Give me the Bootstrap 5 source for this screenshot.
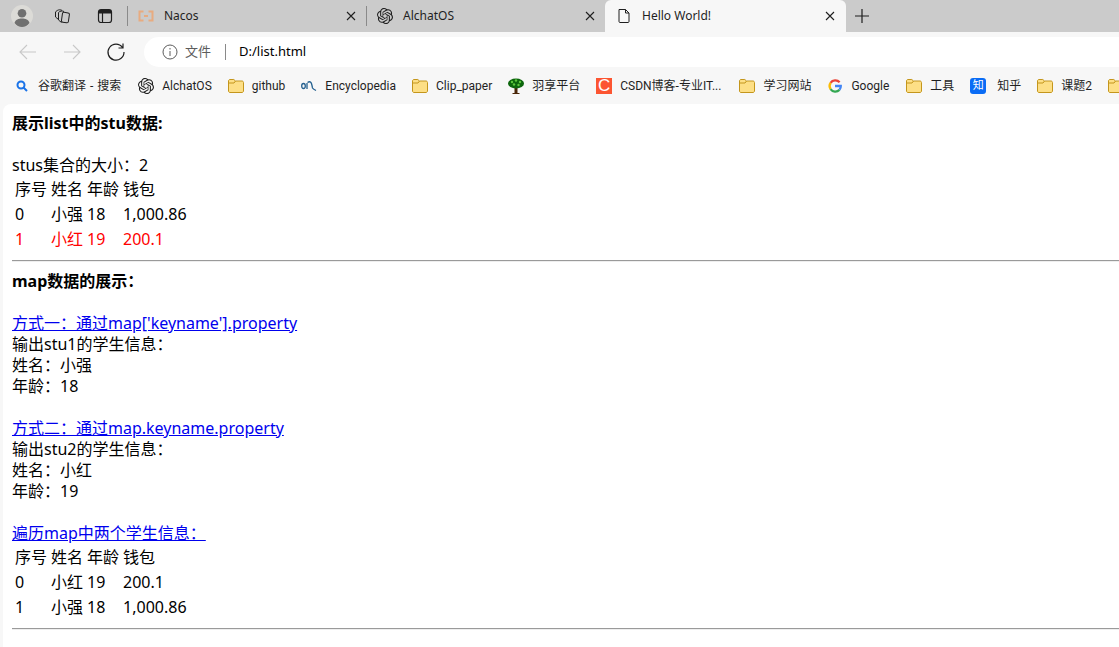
<!DOCTYPE html>
<html lang="zh">

<head>
    <meta charset="utf-8">
    <title>Hello World!</title>
    <link href="https://cdn.jsdelivr.net/npm/bootstrap@5.3.0/dist/css/bootstrap.min.css" rel="stylesheet">
    <style>
        html, body {
            height: 100%;
            overflow: hidden;
        }

        body {
            width: 1119px;
            background-color: #f7f7f7;
            font-family: "Noto Sans", "Noto Sans CJK SC", sans-serif;
            color: #000;
        }

        /* tab strip */
        .tab-strip {
            height: 32px;
            background-color: #cbcbcb;
            font-size: 12px;
            color: #1f1f1f;
        }

        .strip-avatar {
            margin-left: 11px;
            width: 22px;
            height: 22px;
        }

        .strip-btn {
            width: 16px;
            height: 16px;
        }

        .strip-collections {
            margin-left: 21px;
        }

        .strip-actions {
            margin-left: 27px;
            margin-right: 14px;
        }

        .strip-sep {
            width: 1px;
            height: 20px;
            background-color: #8a8a8a;
            flex: none;
        }

        .tab-item {
            width: 238px;
            height: 32px;
            padding: 0 10px;
            flex: none;
        }

        .tab-item.is-active {
            width: 241px;
            height: 36px;
            align-self: flex-start;
            padding: 0 11px 4px;
            background-color: #f7f7f7;
            border-radius: 6px 6px 0 0;
        }

        .tab-icon {
            width: 16px;
            height: 16px;
            flex: none;
            margin-right: 10px;
        }

        .tab-close {
            width: 10px;
            height: 10px;
            margin-left: auto;
            flex: none;
        }

        /* address row */
        .addr-row {
            height: 38px;
            padding-top: 1px;
            position: relative;
        }

        .nav-icon {
            width: 20px;
            height: 20px;
            flex: none;
            margin-left: 24px;
        }

        .nav-back {
            margin-left: 18px;
        }

        .addr-bar {
            margin-left: 18px;
            width: 1000px;
            height: 30px;
            background-color: #fff;
            border-radius: 15px;
            padding-left: 18px;
            font-size: 13px;
            flex: none;
        }

        .addr-label {
            color: #5c5c5c;
            margin-left: 7px;
        }

        .addr-sep {
            width: 1px;
            height: 16px;
            background-color: #8a8a8a;
            margin: 0 13px 0 14px;
        }

        /* bookmarks */
        .mark-row {
            height: 32px;
            margin-bottom: 2px;
            padding-left: 14px;
            font-family: Roboto, "Noto Sans CJK SC", sans-serif;
            font-size: 12px;
            color: #1f1f1f;
            white-space: nowrap;
        }

        .mark-item {
            margin-right: 16px;
            flex: none;
        }

        .mark-search {
            word-spacing: 1px;
            margin-right: 17px;
        }

        .mark-wide {
            margin-right: 18px;
        }

        .mark-google {
            margin-right: 17px;
        }

        .mark-icon {
            width: 16px;
            height: 16px;
            margin-right: 8px;
            flex: none;
        }

        .mark-csdn {
            background-color: #fc5531;
            color: #fff;
            font: 17px/16px "Liberation Sans", sans-serif;
            text-align: center;
        }

        .mark-zhi {
            background-color: #0a6cf5;
            color: #fff;
            border-radius: 3px;
            font-size: 11px;
            line-height: 16px;
            text-align: center;
            margin-right: 11px;
        }

        /* page */
        .page-view {
            margin-left: 3px;
            height: 543px;
            padding: 9px 0 0 9px;
            background-color: #fff;
            border-radius: 8px 0 0 0;
            font-size: 16px;
            line-height: 21px;
            overflow: hidden;
        }

        .page-view a {
            color: #00e;
        }

        .page-view hr {
            margin: 7px 0 9px;
            border: 0;
            border-top: 1px solid #9a9a9a;
            border-bottom: 1px solid #eee;
            opacity: 1;
        }

        .stu-table {
            border-collapse: separate;
            border-spacing: 2px;
        }

        .stu-table td {
            padding: 1px;
        }

        .stu-red td {
            color: #f00;
        }
    </style>
</head>

<body>
    <svg width="0" height="0" class="position-absolute">
        <defs>
            <symbol id="ic-knot" viewBox="0 0 24 24">
                <path fill="currentColor" d="M22.2819 9.8211a5.9847 5.9847 0 0 0-.5157-4.9108 6.0462 6.0462 0 0 0-6.5098-2.9A6.0651 6.0651 0 0 0 4.9807 4.1818a5.9847 5.9847 0 0 0-3.9977 2.9 6.0462 6.0462 0 0 0 .7427 7.0966 5.98 5.98 0 0 0 .511 4.9107 6.051 6.051 0 0 0 6.5146 2.9001A5.9847 5.9847 0 0 0 13.2599 24a6.0557 6.0557 0 0 0 5.7718-4.2058 5.9894 5.9894 0 0 0 3.9977-2.9001 6.0557 6.0557 0 0 0-.7475-7.0729zm-9.022 12.6081a4.4755 4.4755 0 0 1-2.8764-1.0408l.1419-.0804 4.7783-2.7582a.7948.7948 0 0 0 .3927-.6813v-6.7369l2.02 1.1686a.071.071 0 0 1 .038.052v5.5826a4.504 4.504 0 0 1-4.4945 4.4944zm-9.6607-4.1254a4.4708 4.4708 0 0 1-.5346-3.0137l.142.0852 4.783 2.7582a.7712.7712 0 0 0 .7806 0l5.8428-3.3685v2.3324a.0804.0804 0 0 1-.0332.0615L9.74 19.9502a4.4992 4.4992 0 0 1-6.1408-1.6464zM2.3408 7.8956a4.485 4.485 0 0 1 2.3655-1.9728V11.6a.7664.7664 0 0 0 .3879.6765l5.8144 3.3543-2.0201 1.1685a.0757.0757 0 0 1-.071 0l-4.8303-2.7865A4.504 4.504 0 0 1 2.3408 7.872zm16.5963 3.8558L13.1038 8.364 15.1192 7.2a.0757.0757 0 0 1 .071 0l4.8303 2.7913a4.4944 4.4944 0 0 1-.6765 8.1042v-5.6772a.79.79 0 0 0-.407-.667zm2.0107-3.0231l-.142-.0852-4.7735-2.7818a.7759.7759 0 0 0-.7854 0L9.409 9.2297V6.8974a.0662.0662 0 0 1 .0284-.0615l4.8303-2.7866a4.4992 4.4992 0 0 1 6.6802 4.66zM8.3065 12.863l-2.02-1.1638a.0804.0804 0 0 1-.038-.0567V6.0742a4.4992 4.4992 0 0 1 7.3757-3.4537l-.142.0805L8.704 5.459a.7948.7948 0 0 0-.3927.6813zm1.0976-2.3654l2.602-1.4998 2.6069 1.4998v2.9994l-2.5974 1.4997-2.6067-1.4997Z" />
            </symbol>
            <symbol id="ic-folder" viewBox="0 0 16 16">
                <path d="M.5 3C.5 2.200 1.100 1.500 2 1.500h3.800L7.500 3h6.500c.8 0 1.500.7 1.500 1.500V13c0 .8-.7 1.500-1.500 1.500H2c-.9 0-1.500-.7-1.500-1.500Z" fill="#fddf86" stroke="#c4961c" />
                <path d="M.8 5H6l1.500-2" fill="none" stroke="#c4961c" />
            </symbol>
            <symbol id="ic-close" viewBox="0 0 10 10">
                <path d="M1 1l8 8M9 1l-8 8" stroke="#1f1f1f" stroke-width="1.100" fill="none" />
            </symbol>
        </defs>
    </svg>

    <!-- tabs -->
    <div class="tab-strip d-flex align-items-center">
        <svg class="strip-avatar flex-shrink-0" viewBox="0 0 22 22">
            <circle cx="11" cy="11" r="11" fill="#dcdbd7" />
            <circle cx="11" cy="8.200" r="4.300" fill="#707070" />
            <path d="M3.500 18c1-3.500 4-4.500 7.500-4.500s6.500 1 7.500 4.500c-2 2.500-4.500 4-7.500 4s-5.500-1.500-7.500-4Z" fill="#707070" />
        </svg>
        <svg class="strip-btn strip-collections" viewBox="0 0 16 16" fill="none" stroke="#1f1f1f" stroke-width="1">
            <rect x="8" y="4.500" width="7" height="10" rx="1.500" transform="rotate(8 11 9)" />
            <path d="M7.500 14.500 4.500 12V4.500C6 3 8 2.500 10 3.500M4.500 11.500 1.500 9V4C3 2 6 1 8 2.500" />
        </svg>
        <svg class="strip-btn strip-actions" viewBox="0 0 16 16" fill="none" stroke="#1f1f1f" stroke-width="1.200">
            <rect x="1.500" y="1.500" width="13" height="13" rx="2.500" />
            <path d="M5.500 5v9.500" />
            <path d="M2 2h12v3.500H2z" fill="#1f1f1f" stroke="none" />
        </svg>
        <div class="strip-sep"></div>
        <div class="tab-item d-flex align-items-center">
            <svg class="tab-icon" viewBox="0 0 16 16" fill="none" stroke="#e8ab80" stroke-width="2">
                <path d="M5.500 3.500H1.500v9h4M10.500 3.500h4v9h-4M6 8h4" />
            </svg>
            <span>Nacos</span>
            <svg class="tab-close"><use href="#ic-close" /></svg>
        </div>
        <div class="strip-sep"></div>
        <div class="tab-item d-flex align-items-center">
            <svg class="tab-icon"><use href="#ic-knot" /></svg>
            <span>AlchatOS</span>
            <svg class="tab-close"><use href="#ic-close" /></svg>
        </div>
        <div class="tab-item is-active d-flex align-items-center">
            <svg class="tab-icon" viewBox="0 0 16 16" fill="none" stroke="#1f1f1f" stroke-width="1">
                <path d="M3 1.500h6.500L13 5v8.500c0 .6-.4 1-1 1H4c-.6 0-1-.4-1-1ZM9.500 1.500V5H13" />
            </svg>
            <span>Hello World!</span>
            <svg class="tab-close"><use href="#ic-close" /></svg>
        </div>
        <svg class="strip-btn ms-2" viewBox="0 0 16 16" stroke="#1f1f1f" stroke-width="1.200">
            <path d="M8 1v14M1 8h14" />
        </svg>
    </div>

    <!-- address bar -->
    <div class="addr-row d-flex align-items-center">
        <svg class="nav-icon nav-back" viewBox="0 0 20 20" fill="none" stroke="#c8c8c8" stroke-width="1.100">
            <path d="M18 10H2M9 3l-7 7 7 7" />
        </svg>
        <svg class="nav-icon" viewBox="0 0 20 20" fill="none" stroke="#c8c8c8" stroke-width="1.100">
            <path d="M2 10h16M11 3l7 7-7 7" />
        </svg>
        <svg class="nav-icon" viewBox="0 0 20 20" fill="none" stroke="#1f1f1f" stroke-width="1.200">
            <path d="M16.500 5.500A8 8 0 1 0 18 10M17 1.500v4.500h-4.500" />
        </svg>
        <div class="addr-bar d-flex align-items-center">
            <svg width="16" height="16" viewBox="0 0 16 16" fill="none" stroke="#5c5c5c">
                <circle cx="8" cy="8" r="7" />
                <path d="M8 7v5M8 4v1.500" />
            </svg>
            <span class="addr-label">文件</span>
            <span class="addr-sep"></span>
            <span>D:/list.html</span>
        </div>
    </div>

    <!-- bookmarks -->
    <div class="mark-row d-flex align-items-center">
        <div class="mark-item mark-search d-flex align-items-center">
            <svg class="mark-icon" viewBox="0 0 16 16" fill="none" stroke="#1a73e8" stroke-width="2">
                <circle cx="7" cy="7" r="3.500" />
                <path d="M9.500 9.500 13 13" />
            </svg>
            <span>谷歌翻译 - 搜索</span>
        </div>
        <div class="mark-item d-flex align-items-center">
            <svg class="mark-icon"><use href="#ic-knot" /></svg><span>AlchatOS</span>
        </div>
        <div class="mark-item d-flex align-items-center">
            <svg class="mark-icon"><use href="#ic-folder" /></svg><span>github</span>
        </div>
        <div class="mark-item d-flex align-items-center">
            <svg class="mark-icon" viewBox="0 0 16 16" fill="none" stroke="#24608f" stroke-width="1.300">
                <ellipse cx="2.500" cy="8" rx="1.800" ry="2.500" />
                <path d="M6 5v6M6.500 4.500c3-2 4 .5 4.500 3l.5 2.500c.5 1 1.500 1.500 3.500 2.500" />
            </svg>
            <span>Encyclopedia</span>
        </div>
        <div class="mark-item d-flex align-items-center">
            <svg class="mark-icon"><use href="#ic-folder" /></svg><span>Clip_paper</span>
        </div>
        <div class="mark-item d-flex align-items-center">
            <svg class="mark-icon" viewBox="0 0 16 16">
                <path d="M6.500 9h3v6h2v1h-7v-1h2z" fill="#4a2608" />
                <ellipse cx="8" cy="5.500" rx="8" ry="5" fill="#0d660d" />
                <g fill="#5cc63c">
                    <circle cx="4" cy="4" r="1.200" />
                    <circle cx="8" cy="2.500" r="1.200" />
                    <circle cx="12" cy="4" r="1.200" />
                    <circle cx="6" cy="6.500" r="1.200" />
                    <circle cx="10.500" cy="7" r="1.200" />
                </g>
            </svg>
            <span>羽享平台</span>
        </div>
        <div class="mark-item mark-wide d-flex align-items-center">
            <span class="mark-icon mark-csdn">C</span><span>CSDN博客-专业IT...</span>
        </div>
        <div class="mark-item d-flex align-items-center">
            <svg class="mark-icon"><use href="#ic-folder" /></svg><span>学习网站</span>
        </div>
        <div class="mark-item mark-google d-flex align-items-center">
            <svg class="mark-icon" viewBox="-1 -1 18 18" fill="none" stroke-width="2.600">
                <path d="M13.200 3.800A6.500 6.500 0 0 0 3 4.500" stroke="#ea4335" />
                <path d="M3 4.500a6.500 6.500 0 0 0 0 7" stroke="#fbbc05" />
                <path d="M3 11.500a6.500 6.500 0 0 0 10 .8" stroke="#34a853" />
                <path d="M13 12.300A6.500 6.500 0 0 0 14.500 8H8" stroke="#4285f4" />
            </svg>
            <span>Google</span>
        </div>
        <div class="mark-item d-flex align-items-center">
            <svg class="mark-icon"><use href="#ic-folder" /></svg><span>工具</span>
        </div>
        <div class="mark-item d-flex align-items-center">
            <span class="mark-icon mark-zhi">知</span><span>知乎</span>
        </div>
        <div class="mark-item d-flex align-items-center">
            <svg class="mark-icon"><use href="#ic-folder" /></svg><span>课题2</span>
        </div>
        <div class="mark-item d-flex align-items-center">
            <svg class="mark-icon"><use href="#ic-folder" /></svg>
        </div>
    </div>

    <!-- page content -->
    <div class="page-view">
        <b>展示list中的stu数据:</b><br><br>
        stus集合的大小：2<br>
        <table class="stu-table">
            <tr><td>序号</td><td>姓名</td><td>年龄</td><td>钱包</td></tr>
            <tr><td>0</td><td>小强</td><td>18</td><td>1,000.86</td></tr>
            <tr class="stu-red"><td>1</td><td>小红</td><td>19</td><td>200.1</td></tr>
        </table>
        <hr>
        <b>map数据的展示：</b><br><br>
        <a href="#">方式一：通过map['keyname'].property</a><br>
        输出stu1的学生信息：<br>
        姓名：小强<br>
        年龄：18<br><br>
        <a href="#">方式二：通过map.keyname.property</a><br>
        输出stu2的学生信息：<br>
        姓名：小红<br>
        年龄：19<br><br>
        <a href="#">遍历map中两个学生信息：</a><br>
        <table class="stu-table">
            <tr><td>序号</td><td>姓名</td><td>年龄</td><td>钱包</td></tr>
            <tr><td>0</td><td>小红</td><td>19</td><td>200.1</td></tr>
            <tr><td>1</td><td>小强</td><td>18</td><td>1,000.86</td></tr>
        </table>
        <hr>
    </div>
</body>

</html>
